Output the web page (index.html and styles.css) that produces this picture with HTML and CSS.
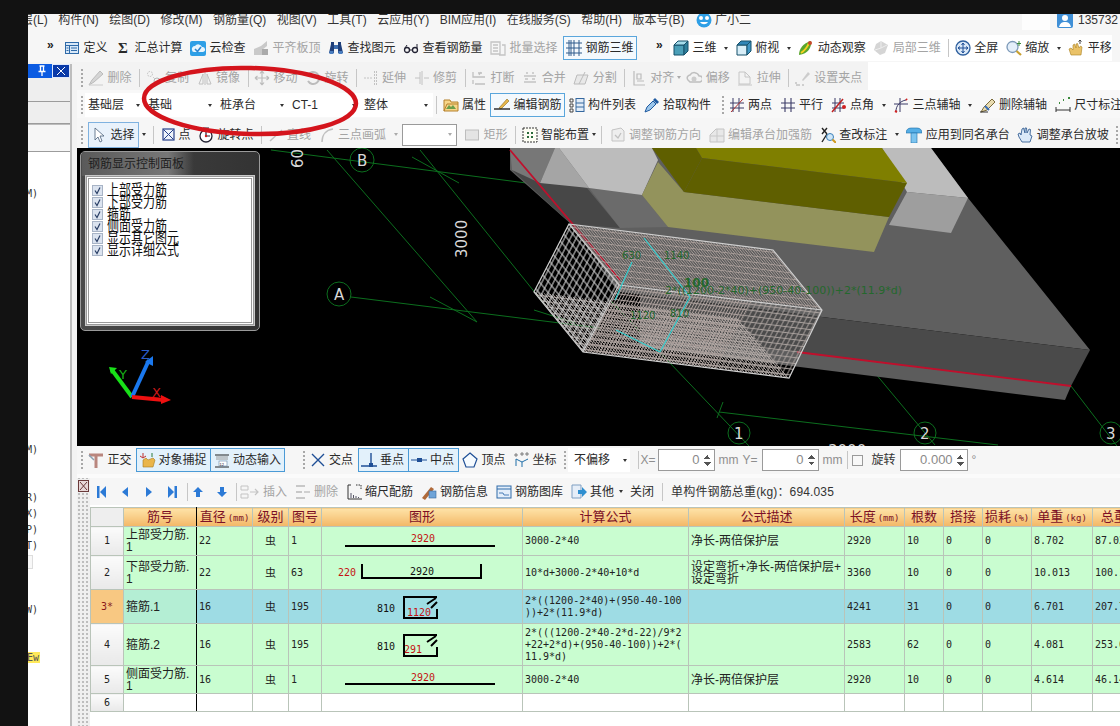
FILE: index.html
```html
<!DOCTYPE html>
<html lang="zh-CN">
<head>
<meta charset="utf-8">
<title>钢筋三维</title>
<link rel="stylesheet" href="styles.css">
</head>
<body>
<svg class="sprite" xmlns="http://www.w3.org/2000/svg">
  <symbol id="def" viewBox="0 0 16 16"><rect x="1.5" y="2.5" width="13" height="11" fill="#d8e8f8" stroke="#2f6aa8"/><path d="M1.5 5.5h13M5.5 5.5v8M2.5 8h2M2.5 10.5h2M7 8h6M7 10.5h6" stroke="#2f6aa8" fill="none"/></symbol>
  <symbol id="cloud" viewBox="0 0 16 16"><rect x="0" y="1" width="16" height="15" rx="2" fill="#2e9fe6"/><path d="M2 10a3 3 0 0 1 3-4 4 4 0 0 1 7 1 2.500 2.500 0 0 1 1 5H4a2 2 0 0 1-2-2z" fill="#e8f5fd"/><path d="M5 9l2.500 2.500L11 7" stroke="#2e86d0" stroke-width="1.600" fill="none"/></symbol>
  <symbol id="flat" viewBox="0 0 16 16"><path d="M1 15V9l7-3 6-5v5l-5 4v5z" fill="#c9c9c9"/><rect x="9" y="9" width="6" height="6" fill="#aaa"/></symbol>
  <symbol id="find" viewBox="0 0 16 16"><path d="M1 13 3 4V2h3v11zM10 13V2h3v2l2 9z" fill="#1f3f7a"/><rect x="6" y="5" width="4" height="4" fill="#3f6fb0"/><rect x="1.500" y="11" width="4" height="3" fill="#4a7ec0"/><rect x="10.500" y="11" width="4" height="3" fill="#4a7ec0"/></symbol>
  <symbol id="glass" viewBox="0 0 16 16"><circle cx="4" cy="10" r="2.500" fill="none" stroke="#223" stroke-width="1.300"/><circle cx="12" cy="10" r="2.500" fill="none" stroke="#223" stroke-width="1.300"/><path d="M6.500 10h3M2 8l2-3M14 8V4" stroke="#223" fill="none"/></symbol>
  <symbol id="batch" viewBox="0 0 16 16"><path d="M1 2h9v12H1zM3 5h5M3 8h5M3 11h5M12 5h3v10h-6" fill="none" stroke="#c4c4c4" stroke-width="1.300"/></symbol>
  <symbol id="grid3d" viewBox="0 0 16 16"><path d="M0 3h16M0 8h16M0 13h16M3 0v16M8 0v16M13 0v16M5 0v16" fill="none" stroke="#2e5a8c"/></symbol>
  <symbol id="cube" viewBox="0 0 16 16"><path d="M1 5h10v10H1z" fill="#4b9fb8" stroke="#16506a"/><path d="M1 5l4-4h10l-4 4z" fill="#a6dceb" stroke="#16506a"/><path d="M11 5l4-4v10l-4 4z" fill="#2f7f9b" stroke="#16506a"/></symbol>
  <symbol id="cube2" viewBox="0 0 16 16"><path d="M1 5h10v10H1z" fill="#d8eef8" stroke="#16506a"/><path d="M1 5l4-4h10l-4 4z" fill="#2f86b8" stroke="#16506a"/><path d="M11 5l4-4v10l-4 4z" fill="#3f97c6" stroke="#16506a"/></symbol>
  <symbol id="orbit" viewBox="0 0 16 16"><path d="M1 15c0-6 4-12 12-14 1 6-3 13-12 14z" fill="#5aa62c"/><path d="M3 13c3-2 6-5 8-10" stroke="#f5d020" stroke-width="2" fill="none"/><circle cx="12" cy="3" r="2" fill="#c8482c"/></symbol>
  <symbol id="local" viewBox="0 0 16 16"><path d="M8 1l7 4-3 8-5 2-6-5 2-6z" fill="#d5d5d5"/><path d="M8 1v7l6-3M8 8l-6 2" stroke="#eee" fill="none"/></symbol>
  <symbol id="full" viewBox="0 0 16 16"><circle cx="8" cy="8" r="7" fill="#dbe9f8" stroke="#2e5f9e" stroke-width="1.300"/><path d="M8 3v10M3 8h10M8 3 6.500 5M8 3l1.500 2M8 13l-1.500-2M8 13l1.500-2M3 8l2-1.500M3 8l2 1.500M13 8l-2-1.500M13 8l-2 1.500" stroke="#1f4f96" fill="none"/></symbol>
  <symbol id="zoomi" viewBox="0 0 16 16"><circle cx="6.500" cy="7" r="5.500" fill="#e4effa" stroke="#7c99b8" stroke-width="1.300"/><path d="M10.500 11l4.500 4" stroke="#c8a030" stroke-width="2.200"/><path d="M13 1v5M11 3.500h4" stroke="#3a8a3a"/></symbol>
  <symbol id="pan" viewBox="0 0 16 16"><path d="M3 15 1 9l2-1 2 2V5l1.500-1L8 8V4l1.500-.5L11 8l1.500-2L14 7l-1 8z" fill="#eac268" stroke="#a87f20" stroke-width=".6"/><path d="M12 0v4M10.500 1.500 12 0l1.500 1.500" stroke="#444" fill="none"/></symbol>
  <symbol id="erase" viewBox="0 0 16 16"><path d="M1 15l3-5 8-9 3 3-9 8z" fill="#d5d5d5" stroke="#bbb"/><path d="M1 15h14" stroke="#ccc"/></symbol>
  <symbol id="copy" viewBox="0 0 16 16"><circle cx="4" cy="4" r="2.500" fill="none" stroke="#c0c0c0" stroke-dasharray="1.500 1"/><circle cx="11" cy="11" r="3" fill="none" stroke="#b5b5b5"/><path d="M7 7l2 2" stroke="#ccc"/></symbol>
  <symbol id="mirror" viewBox="0 0 16 16"><path d="M8 1v14M6 4 2 14h4zM10 4l4 10h-4z" fill="none" stroke="#c0c0c0"/></symbol>
  <symbol id="move" viewBox="0 0 16 16"><path d="M8 1v14M1 8h14M8 1 6 3.500M8 1l2 2.500M8 15l-2-2.500M8 15l2-2.500M1 8l2.500-2M1 8l2.500 2M15 8l-2.500-2M15 8l-2.500 2" fill="none" stroke="#bcbcbc" stroke-width="1.200"/></symbol>
  <symbol id="rot" viewBox="0 0 16 16"><path d="M3 11a6 6 0 1 0 0-6" fill="none" stroke="#bcbcbc" stroke-width="2"/><path d="M1 3h4v4z" fill="#bcbcbc"/></symbol>
  <symbol id="extend" viewBox="0 0 16 16"><path d="M13.500 1v14M11.500 1v14M1 8h8" fill="none" stroke="#c2c2c2" stroke-dasharray="2 1"/></symbol>
  <symbol id="trim" viewBox="0 0 16 16"><path d="M8 1v14M6 2v12M1 8h5M10 8h5" fill="none" stroke="#c2c2c2"/></symbol>
  <symbol id="brk" viewBox="0 0 16 16"><path d="M2 2v5h12M7 3h4M4 14h10M2 10v4M8 5l2-3" fill="none" stroke="#c0c0c0" stroke-width="1.300"/></symbol>
  <symbol id="merge" viewBox="0 0 16 16"><path d="M2 6h12M2 12h12M4 3h2M10 3h2M3 9h3M10 9h3" fill="none" stroke="#c4c4c4" stroke-width="1.300"/></symbol>
  <symbol id="split" viewBox="0 0 16 16"><path d="M1 14l3-9h11l-3 9zM6 14l6-12" fill="#e8e8e8" stroke="#bcbcbc"/></symbol>
  <symbol id="align" viewBox="0 0 16 16"><path d="M3 1v14h11M6 4h4v5H6zM6 11h7" fill="none" stroke="#bcbcbc" stroke-width="1.200"/></symbol>
  <symbol id="off" viewBox="0 0 16 16"><path d="M2 10a3 3 0 0 1 2-5 5 5 0 0 1 9 1 3 3 0 0 1 1 6H4z" fill="none" stroke="#bfbfbf" stroke-width="1.500"/><circle cx="8" cy="9" r="2.500" fill="#ccc"/></symbol>
  <symbol id="stretch" viewBox="0 0 16 16"><path d="M2 14V2h6l5 5v7zM8 2v5h5M1 15h14" fill="none" stroke="#c6c6c6"/></symbol>
  <symbol id="gripset" viewBox="0 0 16 16"><path d="M7 10 13 2l2 2-7 7z" fill="#ccc"/><path d="M1 15h4M7 15h2M1 12v2" stroke="#aaa" fill="none"/></symbol>
  <symbol id="prop" viewBox="0 0 16 16"><path d="M1 3h6l1 2h7v9H1z" fill="#f7d68a" stroke="#b5802a"/><path d="M3 12l3-4 2 2 2-2 3 4z" fill="#6c9e4a"/><path d="M1 14 4 7h11" fill="none" stroke="#b5802a"/></symbol>
  <symbol id="edit" viewBox="0 0 16 16"><path d="M5 11 13 2l2 2-8 8z" fill="#e6b64a" stroke="#8a6a20" stroke-width=".6"/><path d="M0 12h16" stroke="#222" stroke-width="1.400"/></symbol>
  <symbol id="list" viewBox="0 0 16 16"><path d="M1 2h3v3H1zM1 7h3v3H1zM1 12h3v3H1z" fill="none" stroke="#444"/><rect x="7" y="1.500" width="8" height="13" fill="#e2ecf7" stroke="#35689f"/><path d="M7 6h8M7 10h8" stroke="#35689f"/></symbol>
  <symbol id="pick" viewBox="0 0 16 16"><path d="M1 15l2-5 6-6 3 3-6 6z" fill="#9cc6ea" stroke="#1f5aa0"/><path d="M9 3l2-2 4 4-2 2z" fill="#1f5aa0"/></symbol>
  <symbol id="two" viewBox="0 0 16 16"><path d="M4 1v14M10 1v14M1 6h14M1 11h14" fill="none" stroke="#3a3a66"/><path d="M2 15 14 2" stroke="#b03030"/></symbol>
  <symbol id="par" viewBox="0 0 16 16"><path d="M5 1v14M11 1v14M1 6h14M1 11h14" fill="none" stroke="#3a3a66" stroke-width="1.100"/></symbol>
  <symbol id="ang" viewBox="0 0 16 16"><path d="M4 1v14M9 1v14M1 6h12M1 11h12" fill="none" stroke="#3a3a66"/><path d="M1 15 12 2" stroke="#c02020" stroke-width="1.500"/><circle cx="13" cy="10" r="2" fill="#d02020"/></symbol>
  <symbol id="tri" viewBox="0 0 16 16"><path d="M7 1v14M1 7h14M3 14c0-5 4-10 10-11" fill="none" stroke="#3a3a66"/><path d="M2 14l2 1M13 2l1 1" stroke="#d02020" stroke-width="2"/></symbol>
  <symbol id="delaxis" viewBox="0 0 16 16"><path d="M1 15l3-5 8-8 3 3-8 8z" fill="#e9dcb0" stroke="#7a6a3a"/><path d="M5 9l4 4" stroke="#3a6fb8" stroke-width="2"/><path d="M0 15h8" stroke="#333"/></symbol>
  <symbol id="dim" viewBox="0 0 16 16"><path d="M1 10v5M15 10v5M1 13h14" fill="none" stroke="#333"/><path d="M4 6h1M8 3h1M13 1h2" stroke="#3a8a3a" stroke-width="2"/></symbol>
  <symbol id="arrow" viewBox="0 0 16 16"><path d="M4 1v12l3-3 2 5 2-1-2-5h4z" fill="#fff" stroke="#4a5f7a" stroke-width=".8"/></symbol>
  <symbol id="pt" viewBox="0 0 16 16"><rect x="1" y="2" width="11" height="11" fill="#eef3fb" stroke="#27408a" stroke-width="1.200"/><path d="M1.500 2.500l10 10M11.500 2.500l-10 10" stroke="#27408a"/></symbol>
  <symbol id="rotpt" viewBox="0 0 16 16"><circle cx="8" cy="9" r="6" fill="#fff" stroke="#223" stroke-width="1.300"/><path d="M8 9V5M8 9h4M5 1h6" stroke="#223" stroke-width="1.200" fill="none"/><circle cx="8" cy="9" r="1.200" fill="#d02020"/></symbol>
  <symbol id="ln" viewBox="0 0 16 16"><path d="M2 14 14 3" stroke="#c0c0c0" stroke-width="1.500"/></symbol>
  <symbol id="arc" viewBox="0 0 16 16"><path d="M3 15C3 8 7 3 14 2" fill="none" stroke="#c0c0c0" stroke-width="1.500"/></symbol>
  <symbol id="rc" viewBox="0 0 16 16"><rect x="1.500" y="3" width="13" height="10" fill="#e4e4e4" stroke="#bdbdbd"/></symbol>
  <symbol id="smart" viewBox="0 0 16 16"><rect x="1" y="1" width="14" height="14" fill="#fdfdf4" stroke="#333" stroke-dasharray="2 1"/><path d="M5 5h2v2H5zM9 9h2v2H9zM9 5h2v2H9zM5 9h2v2H5z" fill="#2a6a3a"/></symbol>
  <symbol id="adj" viewBox="0 0 16 16"><path d="M2 3l9-2 3 3v10H2z" fill="#eee" stroke="#c4c4c4"/><path d="M5 8l3 3 3-5" stroke="#c0c0c0" fill="none" stroke-width="1.300"/></symbol>
  <symbol id="cap" viewBox="0 0 16 16"><path d="M1 8l6-6h8v13H1z" fill="#e8e8e8" stroke="#c4c4c4"/><path d="M8 2v13M1 9h14" stroke="#c8c8c8"/></symbol>
  <symbol id="chk" viewBox="0 0 16 16"><path d="M2 1l5 6M7 1 2 7M2 15l5-8" stroke="#222" stroke-width="1.400" fill="none"/><circle cx="10" cy="10" r="3.500" fill="#cfe7f8" stroke="#3a7fb8"/><path d="M12.500 12.500 16 16" stroke="#d09a20" stroke-width="2"/></symbol>
  <symbol id="apply" viewBox="0 0 16 16"><path d="M0 6c0-3 2-5 5-5h6c3 0 5 2 5 5z" fill="#55aee6" stroke="#1f6fa8" stroke-width=".6"/><rect x="5" y="6" width="6" height="10" fill="#7cc4ef" stroke="#1f6fa8" stroke-width=".6"/></symbol>
  <symbol id="slope" viewBox="0 0 16 16"><path d="M2 10 1 7l2-1 1 2 1-6 1.500-1L8 6V1h1.500L10 6l2-4 1.500.5L13 8l2 1-2 6H5z" fill="#dbe9f8" stroke="#24528a" stroke-width=".8"/></symbol>
  <symbol id="ortho" viewBox="0 0 16 16"><path d="M1 3h14M8 3v13" stroke="#b9867e" stroke-width="3" fill="none"/><path d="M1 3l5 5" stroke="#8aa0b0" stroke-width="1.500"/></symbol>
  <symbol id="snapc" viewBox="0 0 16 16"><path d="M3 15V8l3-2 2 2 5-2 2 2-2 7z" fill="#eab54a" stroke="#a47a20" stroke-width=".6"/><path d="M3 1v5M0 4l3 2 3-2" stroke="#c03030" fill="none"/><path d="M12 1v4" stroke="#2a7a3a"/></symbol>
  <symbol id="dyn" viewBox="0 0 16 16"><path d="M1 3h14M1 15h14" stroke="#222"/><path d="M2 5h12M2 7h12" stroke="#9a9a9a"/><rect x="5" y="9" width="8" height="5" fill="#fff" stroke="#6688aa" stroke-width=".6"/><text x="5.500" y="13.500" class="dyn-t">12</text></symbol>
  <symbol id="xpt" viewBox="0 0 16 16"><path d="M2 2l12 12M14 2 2 14" stroke="#1f4f96" stroke-width="1.400"/></symbol>
  <symbol id="perp" viewBox="0 0 16 16"><path d="M0 14h16M10 1v13" stroke="#1f4f96" stroke-width="1.400"/><rect x="8" y="11" width="4" height="4" fill="#1f4f96"/></symbol>
  <symbol id="mid" viewBox="0 0 16 16"><path d="M0 8h16" stroke="#1f4f96"/><rect x="6" y="6" width="5" height="4" fill="#1f4f96"/></symbol>
  <symbol id="apex" viewBox="0 0 16 16"><path d="M8 1l7 6-3 8H4L1 7z" fill="#f6fbff" stroke="#1f4f96" stroke-width="1.200"/></symbol>
  <symbol id="coord" viewBox="0 0 16 16"><path d="M3 14V7l6 3 6-3M9 10v5" fill="none" stroke="#1f6fa8"/><path d="M2 2h2v2H2zM8 1h2v2H8zM13 1h2v2h-2z" fill="none" stroke="#555" stroke-width=".7"/></symbol>
  <symbol id="first" viewBox="0 0 16 16"><rect x="3" y="2" width="2.500" height="12" fill="#2c7ad6"/><path d="M12 2v12L6 8z" fill="#2c7ad6"/></symbol>
  <symbol id="prev" viewBox="0 0 16 16"><path d="M11 3v10L5 8z" fill="#2c7ad6"/></symbol>
  <symbol id="next" viewBox="0 0 16 16"><path d="M5 3v10l6-5z" fill="#2c7ad6"/></symbol>
  <symbol id="last" viewBox="0 0 16 16"><path d="M4 2v12l6-6z" fill="#2c7ad6"/><rect x="10.500" y="2" width="2.500" height="12" fill="#2c7ad6"/></symbol>
  <symbol id="up" viewBox="0 0 16 16"><path d="M8 3l5 5h-3v5H6V8H3z" fill="#2c7ad6"/></symbol>
  <symbol id="down" viewBox="0 0 16 16"><path d="M8 13l5-5h-3V3H6v5H3z" fill="#2c7ad6"/></symbol>
  <symbol id="ins" viewBox="0 0 20 16"><path d="M1 2h7v4H1zM1 10h7v4H1z" fill="none" stroke="#c4c4c4"/><path d="M10 8h8M15 5l3 3-3 3" fill="none" stroke="#c4c4c4" stroke-width="1.200"/></symbol>
  <symbol id="del" viewBox="0 0 16 16"><path d="M1 2h9M1 8h6M1 14h9" stroke="#c8c8c8" stroke-width="2"/><path d="M9 8h6" stroke="#bbb" stroke-width="1.300"/></symbol>
  <symbol id="scale" viewBox="0 0 16 16"><path d="M2 1h3M2 1v14h14" fill="none" stroke="#333"/><path d="M5 14V9M7.500 14v-3M10 14v-2M12.500 14v-1" stroke="#556" /><path d="M10 1h5v4" fill="none" stroke="#333" stroke-dasharray="1.500 1"/></symbol>
  <symbol id="info" viewBox="0 0 16 16"><path d="M1 14 10 3l3 2-9 11z" fill="#b06a3a"/><rect x="8" y="7" width="7" height="7" fill="#6fa4d8" stroke="#36689e" stroke-width=".6"/></symbol>
  <symbol id="lib" viewBox="0 0 16 16"><rect x="1" y="2" width="14" height="12" fill="#e3eefa" stroke="#2f6aa8"/><path d="M1 5h14" stroke="#2f6aa8"/><path d="M3 9h4l1 2h5" stroke="#4a7eb8" fill="none"/></symbol>
  <symbol id="other" viewBox="0 0 16 16"><path d="M1 1h9v13H1z" fill="#e6eef8" stroke="#7f9fc2"/><path d="M7 6h4V3l5 5-5 5v-3H7z" fill="#2f8fd0"/></symbol>
  <symbol id="corner" viewBox="0 0 11 12"><rect x=".5" y=".5" width="10" height="11" fill="#e8d8d8" stroke="#6a3a3a"/><path d="M2 2l7 8M9 2 2 10" stroke="#6a3a3a" fill="none"/></symbol>
  <symbol id="tick" viewBox="0 0 11 11"><rect x=".5" y=".5" width="10" height="10" fill="#dbe3ef" stroke="#a8b4c6"/><path d="M3 5.500l2 3 3-6" fill="none" stroke="#2a3f66" stroke-width="1.200"/></symbol>
  <symbol id="bird" viewBox="0 0 18 16"><circle cx="9" cy="8" r="7.500" fill="#2e9fe6"/><circle cx="6" cy="6" r="2" fill="#fff"/><circle cx="12" cy="6" r="2" fill="#fff"/><path d="M5 10c2 3 6 3 8 0z" fill="#fff"/></symbol>
  <symbol id="user" viewBox="0 0 16 16"><rect width="16" height="16" rx="2" fill="#3f8fd6"/><circle cx="8" cy="6" r="3" fill="#fff"/><path d="M2 15c1-4 3-5 6-5s5 1 6 5z" fill="#fff"/></symbol>
  <symbol id="pinIc" viewBox="0 0 10 12"><path d="M2.500 1h5M3.500 1v5M6.500 1v5M1.500 6.500h7M5 6.500V11" stroke="#fff" stroke-width="1.300" fill="none"/></symbol>
  <symbol id="closeIc" viewBox="0 0 18 14"><path d="M5 3l8 8M13 3l-8 8" stroke="#fff" fill="none"/></symbol>
</svg>

<div class="app">
  <nav class="menu">
    <span class="m first">层(L)</span><span class="m">构件(N)</span><span class="m">绘图(D)</span><span class="m">修改(M)</span><span class="m">钢筋量(Q)</span><span class="m">视图(V)</span><span class="m">工具(T)</span><span class="m">云应用(Y)</span><span class="m">BIM应用(I)</span><span class="m">在线服务(S)</span><span class="m">帮助(H)</span><span class="m">版本号(B)</span>
    <span class="m bird"><svg class="ic ic18"><use href="#bird"/></svg>广小二</span>
    <span class="who"><i class="blank"></i><svg class="ic"><use href="#user"/></svg>135732</span>
  </nav>

  <div class="tb tb1">
    <span class="more">»</span>
    <span class="it"><svg class="ic"><use href="#def"/></svg>定义</span>
    <span class="it"><b class="sig">Σ</b>汇总计算</span>
    <span class="it"><svg class="ic"><use href="#cloud"/></svg>云检查</span>
    <span class="it dis"><svg class="ic"><use href="#flat"/></svg>平齐板顶</span>
    <span class="it"><svg class="ic"><use href="#find"/></svg>查找图元</span>
    <span class="it"><svg class="ic"><use href="#glass"/></svg>查看钢筋量</span>
    <span class="it dis"><svg class="ic"><use href="#batch"/></svg>批量选择</span>
    <span class="it btn on pull2"><svg class="ic"><use href="#grid3d"/></svg>钢筋三维</span>
    <span class="more more2">»</span>
    <div class="seg">
      <span class="it"><svg class="ic"><use href="#cube"/></svg>三维</span><i class="car"></i>
      <span class="it"><svg class="ic"><use href="#cube2"/></svg>俯视</span><i class="car"></i>
      <span class="it"><svg class="ic"><use href="#orbit"/></svg>动态观察</span>
      <span class="it dis"><svg class="ic"><use href="#local"/></svg>局部三维</span>
      <i class="sep"></i>
      <span class="it"><svg class="ic"><use href="#full"/></svg>全屏</span>
      <span class="it"><svg class="ic"><use href="#zoomi"/></svg>缩放</span><i class="car"></i>
      <span class="it"><svg class="ic"><use href="#pan"/></svg>平移</span>
    </div>
  </div>

  <div class="work">
    <aside class="side">
      <div class="side-in">
        <div class="dock"><svg class="pin"><use href="#pinIc"/></svg><span class="dock-x"><svg class="dock-xi"><use href="#closeIc"/></svg></span></div>
        <div class="tab"></div>
        <div class="tab tab2"></div>
        <div class="tab tab3"></div>
        <div class="stubs">M)<br><br><br><br><br><br><br><br><br><br><br><br><br><br><br><br>M)<br><br><br>R)<br>X)<br>P)<br>T)<br><i class="stubbtn"></i><br><br>W)<br><br><br><span class="hl">Ew</span></div>
      </div>
    </aside>

    <main class="main">
      <div class="strip-row"><div class="tb strip">
        <i class="grip"></i>
        <span class="it dis"><svg class="ic"><use href="#erase"/></svg>删除</span><i class="sep"></i>
        <span class="it dis"><svg class="ic"><use href="#copy"/></svg>复制</span>
        <span class="it dis"><svg class="ic"><use href="#mirror"/></svg>镜像</span><i class="sep"></i>
        <span class="it dis"><svg class="ic"><use href="#move"/></svg>移动</span>
        <span class="it dis"><svg class="ic"><use href="#rot"/></svg>旋转</span><i class="sep"></i>
        <span class="it dis"><svg class="ic"><use href="#extend"/></svg>延伸</span>
        <span class="it dis"><svg class="ic"><use href="#trim"/></svg>修剪</span><i class="sep"></i>
        <span class="it dis"><svg class="ic"><use href="#brk"/></svg>打断</span>
        <span class="it dis"><svg class="ic"><use href="#merge"/></svg>合并</span>
        <span class="it dis"><svg class="ic"><use href="#split"/></svg>分割</span><i class="sep"></i>
        <span class="it dis"><svg class="ic"><use href="#align"/></svg>对齐</span><i class="car tight dim"></i>
        <span class="it dis"><svg class="ic"><use href="#off"/></svg>偏移</span>
        <span class="it dis"><svg class="ic"><use href="#stretch"/></svg>拉伸</span><i class="sep"></i>
        <span class="it dis"><svg class="ic"><use href="#gripset"/></svg>设置夹点</span>
      </div></div>

      <div class="tb tb3">
        <i class="grip"></i>
        <div class="combos">
          <span class="combo c60">基础层<i class="car"></i></span>
          <span class="combo">基础<i class="car"></i></span>
          <span class="combo">桩承台<i class="car"></i></span>
          <span class="combo">CT-1<i class="car"></i></span>
          <span class="combo">整体<i class="car"></i></span>
        </div>
        <i class="sep"></i>
        <span class="it"><svg class="ic"><use href="#prop"/></svg>属性</span>
        <span class="it btn on pull3"><svg class="ic"><use href="#edit"/></svg>编辑钢筋</span>
        <span class="it"><svg class="ic"><use href="#list"/></svg>构件列表</span>
        <span class="it"><svg class="ic"><use href="#pick"/></svg>拾取构件</span>
        <i class="grip grip-mid"></i>
        <span class="it"><svg class="ic"><use href="#two"/></svg>两点</span>
        <span class="it"><svg class="ic"><use href="#par"/></svg>平行</span>
        <span class="it"><svg class="ic"><use href="#ang"/></svg>点角</span><i class="car"></i>
        <span class="it"><svg class="ic"><use href="#tri"/></svg>三点辅轴</span><i class="car"></i>
        <span class="it"><svg class="ic"><use href="#delaxis"/></svg>删除辅轴</span>
        <span class="it"><svg class="ic"><use href="#dim"/></svg>尺寸标注</span>
      </div>

      <div class="tb tb4">
        <i class="grip"></i>
        <span class="it btn sel"><svg class="ic"><use href="#arrow"/></svg>选择</span><i class="car after-sel"></i>
        <i class="sep sep-flat"></i>
        <span class="it it-pt"><svg class="ic"><use href="#pt"/></svg>点</span>
        <span class="it"><svg class="ic"><use href="#rotpt"/></svg>旋转点</span><i class="sep"></i>
        <span class="it dis"><svg class="ic"><use href="#ln"/></svg>直线</span>
        <span class="it dis"><svg class="ic"><use href="#arc"/></svg>三点画弧</span><i class="car dim"></i>
        <span class="drop"><i class="car dim"></i></span>
        <span class="it dis"><svg class="ic"><use href="#rc"/></svg>矩形</span><i class="sep"></i>
        <span class="it"><svg class="ic"><use href="#smart"/></svg>智能布置</span><i class="car tight"></i><i class="sep sep-flat"></i>
        <span class="it dis"><svg class="ic"><use href="#adj"/></svg>调整钢筋方向</span>
        <span class="it dis"><svg class="ic"><use href="#cap"/></svg>编辑承台加强筋</span>
        <span class="it"><svg class="ic"><use href="#chk"/></svg>查改标注</span><i class="car"></i>
        <span class="it"><svg class="ic"><use href="#apply"/></svg>应用到同名承台</span>
        <span class="it"><svg class="ic"><use href="#slope"/></svg>调整承台放坡</span>
        <i class="grip"></i>
      </div>

      <div class="canvas">
        <svg class="scene" viewBox="77 148 1043 298" width="1043" height="298" xmlns="http://www.w3.org/2000/svg">
          <defs>
            <pattern id="mF" width="10" height="10" patternUnits="userSpaceOnUse" patternTransform="matrix(.29 .036 -.3 .56 619 285)"><path d="M5 0V10" stroke="#aca09c" stroke-width="3.400"/><path d="M0 5H10" stroke="#aca09c" stroke-width="1.800"/></pattern>
            <pattern id="mFs" width="10" height="10" patternUnits="userSpaceOnUse" patternTransform="matrix(.5 .062 -.3 .56 619 285)"><path d="M5 0V10" stroke="#a8a09c" stroke-width="2"/><path d="M0 5H10" stroke="#a8a09c" stroke-width="1.800"/></pattern>
            <pattern id="mT" width="10" height="10" patternUnits="userSpaceOnUse" patternTransform="matrix(.29 .036 .555 .68 569 224)"><path d="M5 0V10" stroke="#a89c98" stroke-width="3.400"/><path d="M0 5H10" stroke="#a89c98" stroke-width="1.400"/></pattern>
            <pattern id="mL" width="10" height="10" patternUnits="userSpaceOnUse" patternTransform="matrix(.357 .436 -.35 .68 569 224)"><path d="M5 0V10" stroke="#cfcfcf" stroke-width="2"/><path d="M0 5H10" stroke="#cfcfcf" stroke-width="1.400"/></pattern>
            <pattern id="mB" width="10" height="10" patternUnits="userSpaceOnUse" patternTransform="matrix(.29 .036 .49 .6 534 292)"><path d="M5 0V10" stroke="#c2b8b4" stroke-width="3.200"/><path d="M0 5H10" stroke="#c2b8b4" stroke-width="1.600"/></pattern>
          </defs>
          <g class="ax">
            <path d="M271 150 565 188M351 297 600 328M327 150 477 322M420 150 545 305M412 157 459 183M430 297 477 322M534 310 575 323"/>
            <path d="M610 300 749 446M870 367 935 445M1071 386 1120 450M719 412 998 445M723 402 717 418"/>
            <circle cx="362" cy="160" r="12"/><circle cx="339" cy="294" r="12"/><circle cx="739" cy="433" r="11"/><circle cx="925" cy="433" r="11"/><circle cx="1111" cy="433" r="11"/>
          </g>
          <polygon class="f-top" points="510,148 931,148 968,198 1090,350 822,317 620,292 571,224 510,170"/>
          <polygon class="f-front" points="640,295 822,317 1090,350 1071,386 640,333"/>
          <polygon class="f-low" points="640,333 1071,386 1065,400 640,347"/>
          <polygon class="f-dark" points="512,170 587,188 620,228 571,224"/>
          <polygon class="f-left" points="510,148 555,148 540,183 512,170"/>
          <polygon class="f-lite" points="555,148 559,148 589,188 540,183"/>
          <polygon class="f-mid" points="589,188 642,195 668,227 620,228"/>
          <polygon class="f-pad" points="559,148 652,148 658,160 642,195 589,188"/>
          <polygon class="f-pad" points="882,148 931,148 968,198 907,192"/>
          <polygon class="f-padf" points="907,192 968,198 951,233 889,225"/>
          <polygon class="f-olv" points="658,162 684,192 889,217 874,252 668,227 642,195"/>
          <polygon class="f-ytop" points="696,148 882,148 907,183 702,158"/>
          <polygon class="f-yside" points="652,148 696,148 702,158 684,192"/>
          <polygon class="f-yside" points="702,158 907,183 889,217 684,192"/>
          <path class="red" d="M510 150 620 280"/>
          <path class="red" d="M797 352 1071 386"/>
          <polygon fill="url(#mB)" points="534,292 738,318 789,378 583,352"/>
          <polygon fill="url(#mL)" points="569,224 619,285 583,352 534,292"/>
          <polygon fill="url(#mT)" points="569,224 773,250 822,310 619,285"/>
          <polygon fill="url(#mF)" points="619,285 752,301 716,369 583,352"/>
          <polygon fill="url(#mFs)" points="752,301 822,310 789,378 716,369"/>
          <path class="wire" d="M569 224 773 250 822 310 789 378 583 352 534 292ZM569 224 619 285 822 310M619 285 583 352"/>
          <path class="cy" d="M644 238 690 297 660 352M615 300 632 262M616 330 660 352"/>
          <g class="gt">
            <text x="622" y="259">630</text><text x="664" y="259">1140</text>
            <text class="gb" x="684" y="287">100</text>
            <text class="gl" x="665" y="294">2*((1200-2*40)+(950-40-100))+2*(11.9*d)</text>
            <text x="630" y="319">1120</text><text x="670" y="317">810</text>
          </g>
          <g class="lab">
            <text x="357" y="166">B</text><text x="334" y="300">A</text>
            <text x="734" y="439">1</text><text x="920" y="439">2</text><text x="1106" y="439">3</text>
            <text x="828" y="456">3000</text>
            <text transform="translate(467 258) rotate(-90)">3000</text>
            <text transform="translate(303 168) rotate(-90)">6000</text>
          </g>
          <path class="tri-g" d="M132 397 112 370"/><path class="tri-gh" d="M109 367l8 1-6 6z"/>
          <path class="tri-b" d="M132 397 149 360"/><path class="tri-bh" d="M153 356l0 10-8-4z"/>
          <path class="tri-r" d="M132 397 164 400"/><path class="tri-rh" d="M171 400l-10-5 0 9z"/>
          <text class="tx-b" x="141" y="359">Z</text><text class="tx-g" x="119" y="379">Y</text><text class="tx-r" x="152" y="397">X</text>
        </svg>

        <div class="panel">
          <div class="panel-t">钢筋显示控制面板</div>
          <ul class="panel-l">
            <li><svg class="tick"><use href="#tick"/></svg><span>上部受力筋</span></li>
            <li><svg class="tick"><use href="#tick"/></svg><span>下部受力筋</span></li>
            <li><svg class="tick"><use href="#tick"/></svg><span>箍筋</span></li>
            <li><svg class="tick"><use href="#tick"/></svg><span>侧面受力筋</span></li>
            <li><svg class="tick"><use href="#tick"/></svg><span>显示其它图元</span></li>
            <li><svg class="tick"><use href="#tick"/></svg><span>显示详细公式</span></li>
          </ul>
        </div>
      </div>

      <div class="tb snap">
        <i class="grip"></i>
        <span class="it"><svg class="ic"><use href="#ortho"/></svg>正交</span>
        <div class="join">
          <span class="it btn tog"><svg class="ic"><use href="#snapc"/></svg>对象捕捉</span>
          <span class="it btn tog"><svg class="ic"><use href="#dyn"/></svg>动态输入</span>
        </div>
        <i class="grip grip-snap"></i>
        <span class="it"><svg class="ic"><use href="#xpt"/></svg>交点</span>
        <div class="join join2">
          <span class="it btn tog tog2"><svg class="ic"><use href="#perp"/></svg>垂点</span>
          <span class="it btn tog tog2"><svg class="ic"><use href="#mid"/></svg>中点</span>
        </div>
        <span class="it"><svg class="ic"><use href="#apex"/></svg>顶点</span>
        <span class="it"><svg class="ic"><use href="#coord"/></svg>坐标</span>
        <i class="grip"></i>
        <span class="combo c-off">不偏移<i class="car"></i></span>
        <div class="fields">
          <i class="sep sep-flat"></i>
          <span class="dim-t x">X=</span>
          <span class="spin">0<i class="arrows"></i></span>
          <span class="dim-t">mm</span>
          <span class="dim-t">Y=</span>
          <span class="spin">0<i class="arrows"></i></span>
          <span class="dim-t">mm</span>
          <i class="sep sep-flat"></i>
          <i class="box"></i>
          <span class="rot">旋转</span>
          <span class="spin wide">0.000<i class="arrows"></i></span>
          <span class="dim-t">°</span>
        </div>
      </div>

      <div class="lower">
        <div class="gripcol"><svg class="corner"><use href="#corner"/></svg></div>
        <div class="grid-wrap">
          <div class="tb rebar">
            <svg class="ic"><use href="#first"/></svg>
            <svg class="ic"><use href="#prev"/></svg>
            <svg class="ic"><use href="#next"/></svg>
            <svg class="ic"><use href="#last"/></svg>
            <i class="sep nar"></i>
            <svg class="ic"><use href="#up"/></svg>
            <svg class="ic"><use href="#down"/></svg>
            <i class="sep nar"></i>
            <span class="it dis"><svg class="ic ic20"><use href="#ins"/></svg>插入</span>
            <span class="it dis"><svg class="ic"><use href="#del"/></svg>删除</span>
            <span class="it"><svg class="ic"><use href="#scale"/></svg>缩尺配筋</span>
            <span class="it"><svg class="ic"><use href="#info"/></svg>钢筋信息</span>
            <span class="it"><svg class="ic"><use href="#lib"/></svg>钢筋图库</span>
            <span class="it"><svg class="ic"><use href="#other"/></svg>其他</span><i class="car tight2"></i>
            <span class="it">关闭</span>
            <i class="sep"></i>
            <span class="it total">单构件钢筋总重(kg)：694.035</span>
          </div>

          <table class="rb">
            <colgroup>
              <col class="w33"><col class="w73"><col class="w56"><col class="w36"><col class="w33"><col class="w201"><col class="w166"><col class="w156"><col class="w60"><col class="w39"><col class="w39"><col class="w49"><col class="w61"><col class="w66">
            </colgroup>
            <thead>
              <tr class="h0">
                <th class="corner-c"></th><th class="fz">筋号</th><th>直径<small>(mm)</small></th><th>级别</th><th>图号</th><th>图形</th><th>计算公式</th><th>公式描述</th><th>长度<small>(mm)</small></th><th>根数</th><th>搭接</th><th>损耗<small>(%)</small></th><th>单重<small>(kg)</small></th><th>总重<small>(kg)</small></th>
              </tr>
            </thead>
            <tbody>
              <tr class="h1">
                <td class="rh">1</td><td class="nm fz">上部受力筋.<br>1</td><td class="n">22</td><td class="ct">虫</td><td class="n">1</td>
                <td class="sh"><svg width="200" height="28"><text class="tr" x="101" y="15">2920</text><path class="bar" d="M23 19H173"/></svg></td>
                <td class="n">3000-2*40</td><td class="ds">净长-两倍保护层</td><td class="n">2920</td><td class="n">10</td><td class="n">0</td><td class="n">0</td><td class="n">8.702</td><td class="n">87.02</td>
              </tr>
              <tr class="h2">
                <td class="rh">2</td><td class="nm fz">下部受力筋.<br>1</td><td class="n">22</td><td class="ct">虫</td><td class="n">63</td>
                <td class="sh"><svg width="200" height="33"><text class="tr" x="25" y="20">220</text><path class="bar" d="M40 8V22H159V8"/><text class="tk" x="100" y="19">2920</text></svg></td>
                <td class="n">10*d+3000-2*40+10*d</td><td class="ds">设定弯折+净长-两倍保护层+<br>设定弯折</td><td class="n">3360</td><td class="n">10</td><td class="n">0</td><td class="n">0</td><td class="n">10.013</td><td class="n">100.13</td>
              </tr>
              <tr class="h2 cur">
                <td class="rh rh-cur">3*</td><td class="nm fz mint">箍筋.1</td><td class="n">16</td><td class="ct">虫</td><td class="n">195</td>
                <td class="sh"><svg width="200" height="33"><text class="tk" x="64" y="22">810</text><path class="bar" d="M115 7H82V28H115V19M105 14 114 8M109 18 115 12"/><text class="tr" x="97" y="26">1120</text></svg></td>
                <td class="n">2*((1200-2*40)+(950-40-100<br>))+2*(11.9*d)</td><td class="ds"></td><td class="n">4241</td><td class="n">31</td><td class="n">0</td><td class="n">0</td><td class="n">6.701</td><td class="n">207.73</td>
              </tr>
              <tr class="h3">
                <td class="rh">4</td><td class="nm fz">箍筋.2</td><td class="n">16</td><td class="ct">虫</td><td class="n">195</td>
                <td class="sh"><svg width="200" height="41"><text class="tk" x="64" y="26">810</text><path class="bar" d="M115 11H82V32H115V23M105 18 114 12M109 22 115 16"/><text class="tr" x="91" y="29">291</text></svg></td>
                <td class="n">2*(((1200-2*40-2*d-22)/9*2<br>+22+2*d)+(950-40-100))+2*(<br>11.9*d)</td><td class="ds"></td><td class="n">2583</td><td class="n">62</td><td class="n">0</td><td class="n">0</td><td class="n">4.081</td><td class="n">253.02</td>
              </tr>
              <tr class="h4">
                <td class="rh">5</td><td class="nm fz">侧面受力筋.<br>1</td><td class="n">16</td><td class="ct">虫</td><td class="n">1</td>
                <td class="sh"><svg width="200" height="27"><text class="tr" x="101" y="15">2920</text><path class="bar" d="M23 18H173"/></svg></td>
                <td class="n">3000-2*40</td><td class="ds">净长-两倍保护层</td><td class="n">2920</td><td class="n">10</td><td class="n">0</td><td class="n">0</td><td class="n">4.614</td><td class="n">46.14</td>
              </tr>
              <tr class="h5">
                <td class="rh">6</td><td class="fz"></td><td></td><td></td><td></td><td></td><td></td><td></td><td></td><td></td><td></td><td></td><td></td><td></td>
              </tr>
            </tbody>
          </table>
        </div>
      </div>
    </main>
  </div>
</div>

<svg class="ring" viewBox="0 0 230 84" xmlns="http://www.w3.org/2000/svg"><ellipse cx="115" cy="41" rx="106" ry="33" transform="rotate(1.500 115 41)"/></svg>
</body>
</html>
```
FILE: styles.css
```css
* { box-sizing: border-box; }
html, body { margin: 0; height: 100%; }
body {
  background: #121212;
  width: 1120px;
  height: 726px;
  overflow: hidden;
  font: 12px/16px "Liberation Sans", "Noto Sans CJK SC", sans-serif;
  color: #2a2a2a;
  position: relative;
}
.sprite { display: none; }
.app {
  margin: 14px 0 0 28px;
  width: 1092px;
  height: 712px;
  overflow: hidden;
  display: flex;
  flex-direction: column;
  background: #fbfbfb;
}
i { font-style: normal; display: block; flex: none; }

/* menu */
.menu { height: 20px; padding-bottom: 8px; flex: none; display: flex; align-items: center; gap: 10.500px; background: #f6f6f6; white-space: nowrap; color: #333; }
.m { flex: none; }
.m.first { margin-left: -7px; }
.m.bird { display: flex; align-items: center; gap: 2px; }
.who { margin-left: auto; display: flex; align-items: center; gap: 5px; padding-right: 2px; }
.blank { width: 28px; height: 20px; background: #fdfdfd; margin-right: 2px; }

/* toolbars */
.tb { height: 28px; flex: none; display: flex; align-items: center; gap: 7.500px; white-space: nowrap; }
.it { display: flex; align-items: center; gap: 3.500px; flex: none; }
.ic { width: 16px; height: 16px; flex: none; display: block; }
.ic18 { width: 18px; }
.ic20 { width: 20px; }
.dis { color: #a4a4a4; }
.sig { width: 16px; text-align: center; font: bold 15px/16px "Liberation Serif", serif; }
.more { width: 7px; font: bold 12px/16px "Liberation Sans", sans-serif; color: #222; margin-top: -6px; }
.sep { width: 1px; height: 18px; background: #c6c6c6; margin-right: -2px; }
.sep-flat { margin-right: 0; }
.sep.nar { margin-left: -1px; margin-right: -5px; }
.car { width: 0; height: 0; border: 2.500px solid transparent; border-top: 3px solid #333; border-bottom: 0; }
.car.dim { border-top-color: #aaa; }
.car.tight { margin-left: -5px; margin-right: -2px; }
.car.tight2 { margin-left: -3px; }
.grip { width: 2px; height: 18px; border-left: 2px dotted #a8a8a8; margin-right: -2.500px; }
.grip-mid { margin-left: 3px; }
.grip-snap { margin-left: 10.500px; }
.btn { border: 1px solid transparent; height: 24px; padding: 0 3px; }
.btn.on { border-color: #5aa6dc; background: #f4f9fd; }
.pull2 { margin-left: -2px; padding: 0 2px; width: 74px; }
.pull3 { margin-left: -3.500px; margin-right: -4px; width: 75px; }

.tb1 { padding-left: 19px; background: #f6f6f6; }
.tb1 > .more:first-child { margin-right: 2.500px; }
.more2 { margin-left: 11.500px; }
.seg { display: flex; align-items: center; gap: 7.500px; background: #fff; height: 26px; padding-left: 3px; margin-left: -.5px; flex: none; }

.work { display: flex; flex: 1; min-height: 0; }
.side { width: 49px; flex: none; background: #f3f3f3; padding-top: 2px; }
.side-in { width: 44px; height: 100%; background: #fff; border-right: 2px solid #bdbdbd; overflow: hidden; }
.dock { height: 14px; background: #0b5be2; display: flex; justify-content: flex-end; align-items: center; gap: 5px; }
.pin { width: 10px; height: 12px; display: block; flex: none; }
.dock-x { width: 18px; height: 14px; background: #0a3aa8; outline: 1px solid #dfe8fb; outline-offset: -1px; flex: none; }
.dock-xi { width: 18px; height: 14px; display: block; }
.tab { height: 24px; background: #eeeeee; border-bottom: 1px solid #9c9c9c; }
.tab2 { height: 22px; }
.tab3 { height: 28px; background: #f6f6f6; border-top: 1px solid #bcbcbc; }
.stubs { padding-top: 34px; margin-left: -2px; font: 10px/16px "DejaVu Sans Mono", monospace; color: #333; }
.stubbtn { width: 5px; height: 14px; margin: 1px 0 1px 2px; background: #f8f8f8; border: 1px solid #ddd; border-left: 0; }
.hl { background: #ffe95a; color: #555; padding: 0 1px; }

.main { flex: 1; min-width: 0; display: flex; flex-direction: column; overflow: hidden; }
.strip-row { height: 28px; flex: none; background: #fff; }
.strip { width: 791px; background: #f3f3f3; padding: 3px 0 0 4px; }
.tb3 { padding: 2px 0 0 4px; background: #f8f8f8; }
.combos { display: flex; margin-left: -3px; margin-right: -4.500px; flex: none; }
.combo { width: 72px; height: 24px; flex: none; display: flex; align-items: center; justify-content: space-between; padding: 0 5px 0 3px; background: #fff; }
.c60 { width: 60px; }
.tb4 { height: 30px; padding: 3px 0 0 4px; background: #f6f6f6; }
.btn.sel { width: 51px; height: 26px; gap: 4px; padding: 0 3px 0 2px; border-color: #7fb2e0; background: #e9f2fb; margin-left: -.5px; }
.after-sel { margin-left: -4.500px; }
.it-pt { gap: 1px; }
.drop { width: 55px; height: 22px; border: 1px solid #9a9a9a; background: #fff; flex: none; margin-left: -3.500px; display: flex; align-items: center; justify-content: flex-end; padding-right: 4px; }

/* canvas */
.canvas { position: relative; height: 298px; flex: none; background: #000; overflow: hidden; }
.scene { display: block; }
.ax { stroke: #0c6e1e; stroke-width: 1; fill: none; }
.f-top { fill: #5f5f5f; }
.f-front { fill: #4a4a4a; }
.f-low { fill: #5c5c5c; }
.f-dark { fill: #474747; }
.f-left { fill: #777; }
.f-lite { fill: #a5a5a5; }
.f-mid { fill: #6b6b6b; }
.f-pad { fill: #bcbcbc; }
.f-padf { fill: #9e9e9e; }
.f-olv { fill: #93935c; }
.f-ytop { fill: #7f7f00; }
.f-yside { fill: #5f5f00; }
.red { stroke: #c00f2c; stroke-width: 1.800; fill: none; }
.wire { stroke: #cfcfcf; stroke-width: 1.200; fill: none; }
.cy { stroke: #35cfd0; stroke-width: 1.200; fill: none; }
.gt text { font: 10px "DejaVu Sans", sans-serif; fill: #24682c; }
.gt .gb { font: bold 12px "DejaVu Sans", sans-serif; }
.gt .gl { font-size: 11px; }
.lab text { font: 15px "DejaVu Sans", sans-serif; fill: #d8d8d8; }
.tri-g { stroke: #18e018; stroke-width: 4; }
.tri-gh { fill: #18e018; }
.tri-b { stroke: #1a78ee; stroke-width: 4; }
.tri-bh { fill: #1a78ee; }
.tri-r { stroke: #ee1010; stroke-width: 4; }
.tri-rh { fill: #ee1010; }
.tx-b, .tx-g, .tx-r { font: 13px "DejaVu Sans", sans-serif; }
.tx-b { fill: #2a5cc8; }
.tx-g { fill: #18b018; }
.tx-r { fill: #c81818; }

.panel { position: absolute; left: 3px; top: 3px; width: 180px; height: 180px; border-radius: 5px; border: 1px solid #9a9a9a; background: linear-gradient(90deg, #4a4a4a, #3a3a3a 60%, #333); padding: 0 5px; }
.panel-t { height: 24px; line-height: 24px; padding-left: 6px; color: #1e1e1e; background: linear-gradient(90deg, #5a5a5a, #777 50%, rgba(90,90,90,0) 65%); margin: 0 0 0 -4px; }
.panel-l { list-style: none; margin: 0; height: 149px; background: #fff; border: 3px double #9a9a9a; box-shadow: 0 0 0 1px #c8c8c8; padding: 5px 0 0 3px; }
.panel-l li { height: 12px; display: flex; align-items: center; gap: 4px; color: #111; line-height: 12px; }
.panel-l span { display: block; transform: scaleY(1.220); }
.tick { width: 11px; height: 11px; flex: none; }

/* snap bar */
.snap { background: #f6f6f6; padding-left: 4px; }
.join { display: flex; flex: none; margin-left: -3.500px; }
.join2 { margin-left: -2.500px; margin-right: -3.500px; }
.tog { width: 75px; gap: 3px; border-color: #4a9ad6; background: #e3f1fb; padding: 0 3px; margin-right: -.5px; }
.tog2 { width: 50.500px; padding: 0 2px; }
.c-off { width: 62px; margin-left: -3px; background: #fff; margin-right: -7.500px; padding: 0 3px 0 6px; }
.fields { display: flex; align-items: center; gap: 4px; flex: none; color: #a0a0a0; margin-left: 7.500px; }
.dim-t { color: #8e8e8e; }
.dim-t.x { margin-left: -2px; margin-right: -2px; }
.spin { width: 57px; height: 22px; border: 1px solid #9a9a9a; background: #fff; display: flex; align-items: center; justify-content: flex-end; gap: 4px; padding-right: 3px; color: #8a8a8a; font-size: 13px; }
.spin.wide { width: 68px; }
.arrows { width: 7px; height: 14px; background:
  linear-gradient(135deg, transparent 50%, #555 50%) 0 2px / 4px 4px no-repeat,
  linear-gradient(225deg, transparent 50%, #555 50%) 3px 2px / 4px 4px no-repeat,
  linear-gradient(45deg, transparent 50%, #555 50%) 0 9px / 4px 4px no-repeat,
  linear-gradient(315deg, transparent 50%, #555 50%) 3px 9px / 4px 4px no-repeat; }
.box { width: 11px; height: 11px; border: 1px solid #9a9a9a; background: #f8f8f8; margin-right: 5px; }
.rot { color: #333; }

/* lower */
.lower { display: flex; flex: 1; min-height: 0; margin-top: 4px; background: #fff; }
.gripcol { width: 13px; flex: none; background: #efefef radial-gradient(#bdbdbd 1px, transparent 1.200px) 0 14px / 4px 4px; }
.corner { width: 11px; height: 12px; display: block; margin: 2px 0 0 1px; background: #efefef; }
.grid-wrap { flex: 1; min-width: 0; overflow: hidden; background: #fff; }
.rebar { height: 27px; padding-left: 3.500px; background: #f6f6f6; margin-bottom: 2px; }
.total { margin-left: 3px; color: #333; letter-spacing: .15px; }

.rb { border-collapse: collapse; table-layout: fixed; width: 1068px; font: 12px/12px "Liberation Sans", "Noto Sans CJK SC", sans-serif; color: #222; }
.w33 { width: 33px; } .w73 { width: 73px; } .w56 { width: 56px; } .w36 { width: 36px; } .w201 { width: 201px; } .w166 { width: 166px; } .w156 { width: 156px; } .w60 { width: 60px; } .w39 { width: 39px; } .w49 { width: 49px; } .w61 { width: 61px; } .w66 { width: 66px; }
.rb th, .rb td { border: 1px solid #b9c4b9; padding: 0 2px; overflow: hidden; white-space: nowrap; }
.rb th { background: linear-gradient(#fee3a8, #f3b766); color: #7c1026; font-weight: normal; text-align: center; font-size: 13px; }
.rb th small { font: 9px "DejaVu Sans Mono", monospace; margin-left: 2px; }
.rb th.corner-c { background: #eee; }
.rb th.fz, .rb td.fz { border-right-color: #000; }
.h0 { height: 19px; } .h1 { height: 29px; } .h2 { height: 34px; } .h3 { height: 42px; } .h4 { height: 28px; } .h5 { height: 18px; }
.rb tbody tr { background: #c9fdd0; }
.rb tbody tr.cur { background: #9edce4; }
.rb tbody tr.h5 { background: #fff; }
.rb td.rh { background: linear-gradient(#fbfbfb, #e9e9e9); text-align: center; font: 10px/12px "DejaVu Sans Mono", monospace; }
.rb td.rh-cur { background: #f8c882; color: #8c1a1a; }
.rb td.mint { background: #b4eed4; }
.rb td.n { font: 10px/12px "DejaVu Sans Mono", monospace; }
.rb td.ct { text-align: center; font-size: 11px; }
.rb td.ds { font-size: 12px; color: #222; }
.rb td.sh { padding: 0; }
.sh svg { display: block; }
.tr, .tk { font: 10px "DejaVu Sans Mono", monospace; text-anchor: middle; }
.tr { fill: #c41212; }
.tk { fill: #111; }
.bar { stroke: #000; stroke-width: 2; fill: none; }
.dyn-t { font: 4px "Liberation Sans", sans-serif; fill: #223; }

.ring { position: absolute; left: 135px; top: 60px; width: 230px; height: 84px; pointer-events: none; }
.ring ellipse { fill: none; stroke: #d4141c; stroke-width: 4.500; }
```
